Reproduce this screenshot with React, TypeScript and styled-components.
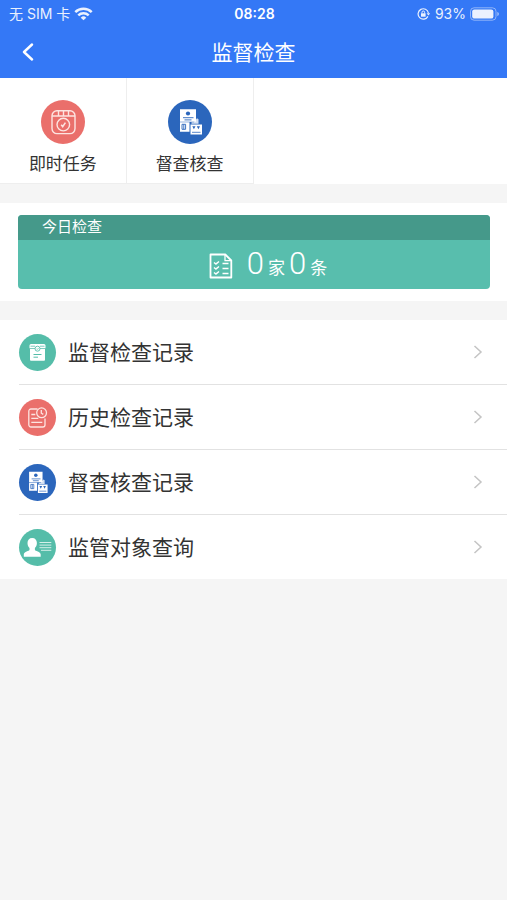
import React from "react";
import styled, { createGlobalStyle } from "styled-components";

const GlobalStyle = createGlobalStyle`
  *, *::before, *::after { box-sizing: border-box; }
  html, body { margin: 0; background: #f5f5f5; }
  body, button {
    font-family: Roboto, "Noto Sans CJK SC", sans-serif;
    color: #333;
  }
  button { margin: 0; padding: 0; border: 0; background: none; cursor: pointer; }
  h1, h2, p, ul { margin: 0; padding: 0; font-weight: 400; }
  svg { display: block; flex: none; }
`;

const Header = styled.header`
  background: #3478f6;
  color: #fff;
`;

const StatusBar = styled.div`
  display: grid;
  grid-template-columns: 1fr auto 1fr;
  align-items: center;
  height: 28px;
  padding: 0 7px 0 9px;
  font-family: Inter, "Noto Sans CJK SC", sans-serif;
  font-size: 14px;
  line-height: 28px;
`;

const StatusGroup = styled.div<{ $end?: boolean }>`
  display: flex;
  align-items: center;
  justify-content: ${(p) => (p.$end ? "flex-end" : "flex-start")};
  gap: 4px;
  white-space: nowrap;
  opacity: 0.9;
`;

const Clock = styled.time`
  font-weight: 600;
`;

const NavBar = styled.div`
  display: grid;
  grid-template-columns: 56px 1fr 56px;
  align-items: center;
  height: 50px;
`;

const BackButton = styled.button`
  display: flex;
  align-items: center;
  height: 48px;
  padding: 0 0 2px 22px;
  color: #fff;
`;

const Title = styled.h1`
  font-size: 21px;
  line-height: 48px;
  text-align: center;
`;

const Tiles = styled.nav`
  display: grid;
  grid-template-columns: repeat(4, 1fr);
  background: #fff;
`;

const Tile = styled.button`
  display: flex;
  flex-direction: column;
  align-items: center;
  gap: 8px;
  height: 106px;
  padding-top: 22px;
  border-right: 1px solid #eee;
  border-bottom: 1px solid #eee;
  font-size: 17px;
  line-height: 24px;
`;

const Summary = styled.section`
  margin: 19px 0;
  padding: 12px 17px 12px 18px;
  background: #fff;
`;

const Card = styled.div`
  overflow: hidden;
  border-radius: 4px;
  background: #58bead;
  color: #fff;
`;

const CardTitle = styled.h2`
  padding-left: 24px;
  background: #45998a;
  font-size: 15px;
  line-height: 25px;
`;

const CardBody = styled.div`
  display: flex;
  align-items: center;
  justify-content: center;
  gap: 14px;
  height: 49px;
  padding: 2px 0 0 28px;
`;

const Counts = styled.p`
  display: flex;
  align-items: baseline;
  gap: 4px;
  font-size: 17px;
  line-height: 48px;
`;

const Count = styled.span`
  font-size: 31px;
  font-weight: 300;
`;

const List = styled.ul`
  list-style: none;
  background: #fff;
`;

const Item = styled.li`
  margin-left: 19px;
  border-bottom: 1px solid #e2e2e2;
  &:last-child { border-bottom: 0; }
`;

const RowButton = styled.button`
  display: flex;
  align-items: center;
  gap: 12px;
  width: 100%;
  height: 64px;
  padding-right: 24px;
  font-size: 21px;
  text-align: left;
`;

const RowLabel = styled.span`
  flex: 1;
  padding-bottom: 2px;
`;

const Badge = styled.span<{ $color: string; $size: number }>`
  display: flex;
  flex: none;
  width: ${(p) => p.$size}px;
  height: ${(p) => p.$size}px;
  border-radius: 50%;
  background: ${(p) => p.$color};
  svg { width: 100%; height: 100%; }
`;

const RED = "#ea6f6b";
const BLUE = "#2b66bc";
const GREEN = "#55bda9";

const WifiIcon = () => (
  <svg width="19" height="14" viewBox="0 0 19 14" fill="none" stroke="#fff" strokeWidth="2.5" aria-hidden="true">
    <path d="M1.3 5.2a11.6 11.6 0 0 1 16.4 0M4.3 8.4a7.4 7.4 0 0 1 10.4 0" />
    <path d="M9.5 13.3 6.7 10.7a4 4 0 0 1 5.6 0z" fill="#fff" stroke="none" />
  </svg>
);

const LockIcon = () => (
  <svg width="14" height="12" viewBox="0 0 14 12" fill="none" stroke="#fff" strokeWidth="1.2" aria-hidden="true">
    <path d="M10.9 8.4A5.2 5.2 0 1 1 11.4 5" />
    <path d="m9.6 5.2 1.8 2.3 1.8-2.3z" fill="#fff" stroke="none" />
    <path d="M4 5.3h4.6v3.4H4z" fill="#fff" stroke="none" />
    <path d="M5 5.5V4.3a1.3 1.3 0 0 1 2.6 0v1.2" strokeWidth="1" />
  </svg>
);

const BatteryIcon = () => (
  <svg width="30" height="14" viewBox="0 0 30 14" aria-hidden="true">
    <rect x="0.5" y="0.8" width="25.5" height="12.4" rx="3.6" fill="none" stroke="#fff" strokeOpacity="0.5" />
    <rect x="2.2" y="2.4" width="21.2" height="9.2" rx="2.2" fill="#fff" />
    <path d="M27.3 5v4c1-.3 1.6-1.1 1.6-2s-.6-1.7-1.6-2z" fill="#fff" fillOpacity="0.6" />
  </svg>
);

const BackIcon = () => (
  <svg width="12" height="18" viewBox="0 0 12 18" fill="none" stroke="#fff" strokeWidth="2.4" strokeLinecap="round" strokeLinejoin="round" aria-hidden="true">
    <path d="M10 1.5 2 9l8 7.5" />
  </svg>
);

const ChevronIcon = () => (
  <svg width="10" height="14" viewBox="0 0 10 14" fill="none" stroke="#c4c4c4" strokeWidth="1.5" aria-hidden="true">
    <path d="M1.5 1 8 7l-6.5 6" />
  </svg>
);

const TaskIcon = () => (
  <svg viewBox="0 0 44 44" fill="none" stroke="#fde4e1" strokeWidth="1.4" aria-hidden="true">
    <rect x="11" y="10.8" width="23" height="22.8" rx="5" />
    <path d="M11 16h23M17.500 11v5M22.500 11v5M27.500 11v5" />
    <circle cx="22.300" cy="24.600" r="6.300" />
    <path d="m20.200 24.800 1.500 1.800 2.700-4" strokeWidth="1.600" />
  </svg>
);

const DocumentsIcon = () => (
  <svg viewBox="0 0 44 44" aria-hidden="true">
    <path fill="#fff" d="M12 9.300h16v12.500H12zM12 22.300h9.500v9.400H12zM22.500 24.500H34v10H22.500z" />
    <path fill="#fff" d="M23.500 22.300h2.300l3.200-4 1.500 1v4.400h-7z" opacity="0.800" />
    <circle cx="20" cy="13.500" r="2.100" fill={BLUE} />
    <path d="M15 17.700h10.500M16.500 19.900h7" stroke={BLUE} strokeWidth="0.900" />
    <path d="M14 24.300h3.600v5H14zM15.800 24.300v5" stroke={BLUE} strokeWidth="0.900" fill="none" />
    <path d="m24.300 26.300h3.200l-1.600 3zM28.800 26.300h3.200l-1.600 3z" fill={BLUE} />
    <path d="M24 32.300h8.500" stroke={BLUE} strokeWidth="0.800" />
  </svg>
);

const ArchiveIcon = () => (
  <svg viewBox="0 0 37 37" fill="none" aria-hidden="true">
    <path d="M12 10h13a1.500 1.500 0 0 1 1.500 1.500v2.700h-16v-2.700A1.500 1.500 0 0 1 12 10z" fill="#fff" />
    <path d="M11 15h15v10.800a1 1 0 0 1-1 1H12a1 1 0 0 1-1-1z" fill="#fff" />
    <path d="M11.500 12.200h4.500M21 12.200h4.500" stroke={GREEN} strokeWidth="0.800" />
    <circle cx="18.500" cy="14.700" r="2.500" fill="#fff" stroke={GREEN} strokeWidth="0.900" />
    <path d="m17.500 14.700.8.800 1.300-1.500" stroke={GREEN} strokeWidth="0.700" />
    <path d="M14.500 20.500h8M14.500 23.200h4.500" stroke={GREEN} strokeWidth="1" />
  </svg>
);

const HistoryIcon = () => (
  <svg viewBox="0 0 37 37" fill="none" stroke="#fde4e1" strokeWidth="1.300" aria-hidden="true">
    <path d="M18.500 10H12a2.200 2.200 0 0 0-2.200 2.200v13.600A2.200 2.200 0 0 0 12 28h11.800a2.200 2.200 0 0 0 2.200-2.200V19.500" />
    <circle cx="22.600" cy="13.800" r="4.900" />
    <path d="M22.300 11v3.200l2 1.200M12.300 15.500h4M12.300 19.300h7M12.300 23.300h11" />
  </svg>
);

const PersonIcon = () => (
  <svg viewBox="0 0 37 37" aria-hidden="true">
    <path
      fill="#fff"
      d="M13.200 9c3 0 4.700 2 4.700 5 0 2.100-.8 4-2 5v1.900c0 .8 5.800 1.600 5.800 4.600v2.200H4.800v-2.200c0-3 5.700-3.800 5.700-4.600V19c-1.200-1-2-2.900-2-5 0-3 1.700-5 4.700-5z"
    />
    <path d="M20.500 13.500h11.800M20.500 16.100h11.800M20.500 18.700h11.800M22 21.300h10.300" stroke="#d5efe9" strokeWidth="1" />
  </svg>
);

const ChecklistIcon = () => (
  <svg width="24" height="26" viewBox="0 0 24 26" fill="none" stroke="#fff" strokeWidth="1.8" strokeLinejoin="round" aria-hidden="true">
    <path d="M1.500 1.500h14.800l6 6v17H1.500z" />
    <path d="M16 1.800v5.900h6" strokeWidth="1.300" />
    <path d="m5 9.500 1.800 1.600L10 8.500M5 14.500l1.800 1.600 3.200-2.600M5 19.500l1.800 1.600 3.200-2.600" strokeWidth="1.400" />
    <path d="M13.500 10.500h6M13.500 15.500h6M13.500 20.500h6" strokeWidth="1.600" />
  </svg>
);

const tiles = [
  { label: "即时任务", color: RED, Icon: TaskIcon },
  { label: "督查核查", color: BLUE, Icon: DocumentsIcon },
];

const rows = [
  { label: "监督检查记录", color: GREEN, Icon: ArchiveIcon },
  { label: "历史检查记录", color: RED, Icon: HistoryIcon },
  { label: "督查核查记录", color: BLUE, Icon: DocumentsIcon },
  { label: "监管对象查询", color: GREEN, Icon: PersonIcon },
];

export default function App() {
  return (
    <>
      <GlobalStyle />
      <Header>
        <StatusBar>
          <StatusGroup>
            <span>无 SIM 卡</span>
            <WifiIcon />
          </StatusGroup>
          <Clock>08:28</Clock>
          <StatusGroup $end>
            <LockIcon />
            <span>93%</span>
            <BatteryIcon />
          </StatusGroup>
        </StatusBar>
        <NavBar>
          <BackButton aria-label="返回">
            <BackIcon />
          </BackButton>
          <Title>监督检查</Title>
        </NavBar>
      </Header>
      <main>
        <Tiles>
          {tiles.map(({ label, color, Icon }) => (
            <Tile key={label}>
              <Badge $color={color} $size={44}>
                <Icon />
              </Badge>
              {label}
            </Tile>
          ))}
        </Tiles>
        <Summary>
          <Card>
            <CardTitle>今日检查</CardTitle>
            <CardBody>
              <ChecklistIcon />
              <Counts>
                <Count>0</Count>家<Count>0</Count>条
              </Counts>
            </CardBody>
          </Card>
        </Summary>
        <List>
          {rows.map(({ label, color, Icon }) => (
            <Item key={label}>
              <RowButton>
                <Badge $color={color} $size={37}>
                  <Icon />
                </Badge>
                <RowLabel>{label}</RowLabel>
                <ChevronIcon />
              </RowButton>
            </Item>
          ))}
        </List>
      </main>
    </>
  );
}
